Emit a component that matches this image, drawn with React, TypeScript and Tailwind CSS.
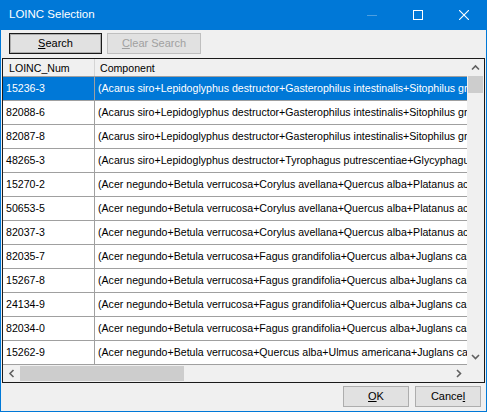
import React from "react";

type Row = { num: string; comp: string };

const A1 =
  "(Acarus siro+Lepidoglyphus destructor+Gasterophilus intestinalis+Sitophilus granarius) Ab.IgE";
const A2 =
  "(Acarus siro+Lepidoglyphus destructor+Tyrophagus putrescentiae+Glycyphagus domesticus) Ab.IgE";
const B1 =
  "(Acer negundo+Betula verrucosa+Corylus avellana+Quercus alba+Platanus acerifolia) Ab.IgE";
const B2 =
  "(Acer negundo+Betula verrucosa+Fagus grandifolia+Quercus alba+Juglans californica) Ab.IgE";
const B3 =
  "(Acer negundo+Betula verrucosa+Quercus alba+Ulmus americana+Juglans californica) Ab.IgE";

const rows: Row[] = [
  { num: "15236-3", comp: A1 },
  { num: "82088-6", comp: A1 },
  { num: "82087-8", comp: A1 },
  { num: "48265-3", comp: A2 },
  { num: "15270-2", comp: B1 },
  { num: "50653-5", comp: B1 },
  { num: "82037-3", comp: B1 },
  { num: "82035-7", comp: B2 },
  { num: "15267-8", comp: B2 },
  { num: "24134-9", comp: B2 },
  { num: "82034-0", comp: B2 },
  { num: "15262-9", comp: B3 },
];

const font = { fontFamily: '"Liberation Sans", Arial, sans-serif' };

function Chevron({ dir }: { dir: "up" | "down" | "left" | "right" }) {
  const paths = {
    up: "M1 5.5 L4.5 2 L8 5.5",
    down: "M1 2 L4.5 5.5 L8 2",
    left: "M5.5 1 L2 4.5 L5.5 8",
    right: "M2 1 L5.5 4.5 L2 8",
  };
  const box = dir === "up" || dir === "down" ? "0 0 9 7" : "0 0 7 9";
  const cls = dir === "up" || dir === "down" ? "w-[9px] h-[7px]" : "w-[7px] h-[9px]";
  return (
    <svg viewBox={box} className={cls}>
      <path d={paths[dir]} fill="none" stroke="#606060" strokeWidth="1.6" />
    </svg>
  );
}

function Button({
  children,
  w,
  variant = "normal",
}: {
  children: React.ReactNode;
  w: string;
  variant?: "normal" | "default" | "disabled";
}) {
  const look =
    variant === "default"
      ? "border-[#1a1a1a] text-black"
      : variant === "disabled"
        ? "border-[#bfbfbf] text-[#a0a0a0]"
        : "border-[#adadad] text-black";
  return (
    <div
      className={`${w} h-[21px] flex items-center justify-center border bg-[#e1e1e1] text-[11px] ${look}`}
    >
      {variant === "default" ? (
        <div className="w-full h-full border border-[#adadad] flex items-center justify-center">
          {children}
        </div>
      ) : (
        children
      )}
    </div>
  );
}

export default function App() {
  return (
    <div
      className="w-[487px] h-[412px] flex flex-col bg-[#f0f0f0] border-x border-b border-[#0078d7] overflow-hidden"
      style={font}
    >
      {/* title bar */}
      <div className="h-[30px] shrink-0 bg-[#0078d7] flex items-center text-white -mx-px">
        <span className="ml-[9px] text-[11.5px] flex-1">LOINC Selection</span>
        <div className="w-[46px] h-full flex items-center justify-center">
          <div className="w-[10px] h-px bg-[#4d9fe0]" />
        </div>
        <div className="w-[46px] h-full flex items-center justify-center">
          <div className="w-[10px] h-[10px] border border-white" />
        </div>
        <div className="w-[46px] h-full flex items-center justify-center">
          <svg viewBox="0 0 10 10" className="w-[10px] h-[10px]">
            <path d="M0 0 L10 10 M10 0 L0 10" stroke="white" strokeWidth="1.1" />
          </svg>
        </div>
      </div>

      {/* toolbar */}
      <div className="h-[28px] shrink-0 flex items-start gap-[5px] pl-[8px] pt-[3px]">
        <Button w="w-[93px]" variant="default">
          <span>
            <span className="underline">S</span>earch
          </span>
        </Button>
        <Button w="w-[94px]" variant="disabled">
          <span>
            <span className="underline">C</span>lear Search
          </span>
        </Button>
      </div>

      {/* grid */}
      <div className="mx-px h-[325px] shrink-0 border border-[#1a1a1a] bg-white flex flex-col">
        <div className="flex flex-1 min-h-0">
          <div className="flex-1 min-w-0 overflow-hidden text-[10.6px]">
            <div className="h-[18px] flex bg-[#f0f0f0] border-b border-[#a0a0a0] text-black">
              <div className="w-[92px] shrink-0 flex items-center pt-[2px] pl-[6px] border-r border-[#d5d5d5]">
                LOINC_Num
              </div>
              <div className="flex-1 flex items-center pt-[2px] pl-[5px]">Component</div>
            </div>
            {rows.map((r, i) => {
              const sel = i === 0;
              return (
                <div
                  key={r.num}
                  className={`h-[24px] flex border-b border-[#a0a0a0] pt-px ${
                    sel ? "bg-[#0078d7] text-white" : "bg-white text-black"
                  }`}
                >
                  <div className="w-[92px] shrink-0 flex items-center pl-[3px] border-r border-[#a0a0a0] -mt-px">
                    <span className="pt-px">{r.num}</span>
                  </div>
                  <div className="flex-1 min-w-0 flex items-center pl-[3px] whitespace-nowrap overflow-hidden">
                    {r.comp}
                  </div>
                </div>
              );
            })}
          </div>
          {/* vertical scrollbar */}
          <div className="w-[17px] shrink-0 bg-[#f0f0f0] flex flex-col">
            <div className="h-[17px] flex items-center justify-center">
              <Chevron dir="up" />
            </div>
            <div className="h-[17px] mx-px bg-[#cdcdcd]" />
            <div className="flex-1" />
            <div className="h-[17px] flex items-center justify-center">
              <Chevron dir="down" />
            </div>
          </div>
        </div>
        {/* horizontal scrollbar */}
        <div className="h-[17px] shrink-0 flex bg-[#f0f0f0]">
          <div className="flex-1 flex">
            <div className="w-[17px] flex items-center justify-center">
              <Chevron dir="left" />
            </div>
            <div className="w-[164px] my-px bg-[#cdcdcd]" />
            <div className="flex-1" />
            <div className="w-[17px] flex items-center justify-center">
              <Chevron dir="right" />
            </div>
          </div>
          <div className="w-[17px]" />
        </div>
      </div>

      {/* bottom buttons */}
      <div className="flex-1 flex justify-end items-start gap-[6px] pr-[5px] pt-[3px]">
        <Button w="w-[66px]">
          <span>
            <span className="underline">O</span>K
          </span>
        </Button>
        <Button w="w-[66px]">
          <span>
            Cance<span className="underline">l</span>
          </span>
        </Button>
      </div>
    </div>
  );
}
